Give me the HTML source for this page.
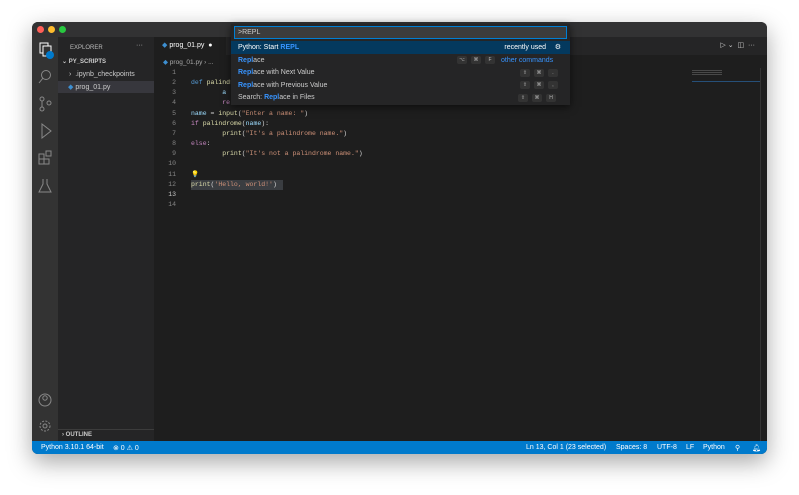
<!DOCTYPE html>
<html><head><style>
*{margin:0;padding:0;box-sizing:border-box}
body{width:799px;height:495px;background:#fff;font-family:"Liberation Sans",sans-serif;position:relative;overflow:hidden}
.win{position:absolute;left:32px;top:22px;width:735px;height:432px;background:#1e1e1e;border-radius:6px;overflow:hidden;box-shadow:0 8px 24px rgba(0,0,0,.35)}
.title{position:absolute;left:0;top:0;width:100%;height:15px;background:#323233}
.dot{position:absolute;top:4px;width:7px;height:7px;border-radius:50%}
.act{position:absolute;left:0;top:15px;width:26px;height:404px;background:#333333}
.side{position:absolute;left:26px;top:15px;width:96px;height:404px;background:#252526;color:#ccc;font-size:7px}
.tabs{position:absolute;left:122px;top:15px;right:0;height:18px;background:#252526}
.tab{position:absolute;left:0;top:0;width:72px;height:18px;background:#1e1e1e;color:#fff;font-size:7px;padding:4px 0 0 8px}
.crumb{position:absolute;left:122px;top:33px;right:0;height:13px;background:#1e1e1e;color:#aaa;font-size:6.5px;padding:3px 0 0 9px}
.code{position:absolute;left:122px;top:46px;font-family:"Liberation Mono",monospace;font-size:6.5px;line-height:10.15px;color:#d4d4d4}
.ln{position:absolute;left:0;width:22px;text-align:right;color:#858585}
.cl{position:absolute;left:37px;white-space:pre}
.status{position:absolute;left:0;bottom:0;width:100%;height:13px;background:#007acc;color:#fff;font-size:7px}
.status span{position:absolute;top:2.5px}
.qp{position:absolute;left:231px;top:24px;width:339px;height:81px;background:#252526;box-shadow:0 2px 8px rgba(0,0,0,.6);font-size:7px;color:#ccc}
.qi{position:absolute;left:3px;top:2px;width:333px;height:13px;background:#3c3c3c;border:1px solid #007fd4;color:#ccc;padding:2px 0 0 3px;font-size:7px}
.row{position:absolute;left:0;width:339px;height:12.5px;padding:2.5px 0 0 7px}
.b{color:#3794ff;font-weight:bold}
.k{position:absolute;top:2px;width:10px;height:8px;background:#333;border-radius:2px;color:#bbb;font-size:5px;text-align:center;line-height:8px}
.kw{color:#c586c0}.fn{color:#dcdcaa}.st{color:#ce9178}.vr{color:#9cdcfe}.df{color:#569cd6}
</style></head><body>
<div class="win">
 <div class="title"><div class="dot" style="left:5px;background:#ff5f57"></div><div class="dot" style="left:16px;background:#febc2e"></div><div class="dot" style="left:27px;background:#28c840"></div></div>
 <div class="act">
  <svg width="26" height="404" fill="none" stroke="#ccc" stroke-width="1">
   <rect x="8" y="6" width="8" height="10" stroke="#fff"/><rect x="11" y="9" width="8" height="10" fill="#333" stroke="#fff"/>
   <circle cx="18" cy="18" r="4" fill="#007acc" stroke="none"/>
   <circle cx="14" cy="38" r="4.5" stroke="#888"/><line x1="11" y1="41" x2="7" y2="46" stroke="#888"/>
   <circle cx="10" cy="62" r="2" stroke="#888"/><circle cx="10" cy="72" r="2" stroke="#888"/><circle cx="17" cy="66" r="2" stroke="#888"/><line x1="10" y1="64" x2="10" y2="70" stroke="#888"/>
   <path d="M10 87 L19 94 L10 101 Z" stroke="#888"/>
   <rect x="7" y="117" width="5" height="5" stroke="#888"/><rect x="7" y="122" width="5" height="5" stroke="#888"/><rect x="12" y="122" width="5" height="5" stroke="#888"/><rect x="14" y="114" width="5" height="5" stroke="#888"/>
   <path d="M11 142 V147 L7 155 H19 L15 147 V142" stroke="#888"/>
   <circle cx="13" cy="363" r="6" stroke="#888"/><circle cx="13" cy="361" r="2.2" stroke="#888"/>
   <circle cx="13" cy="389" r="5" stroke="#888" stroke-dasharray="2 1.4"/><circle cx="13" cy="389" r="2" stroke="#888"/>
  </svg>
 </div>
 <div class="side">
  <div style="position:absolute;left:12px;top:8px;color:#bbb;font-size:6px">EXPLORER</div>
  <div style="position:absolute;left:78px;top:5px;color:#bbb">···</div>
  <div style="position:absolute;left:4px;top:21px;font-weight:bold;font-size:6px">⌄ PY_SCRIPTS</div>
  <div style="position:absolute;left:11px;top:34px">›&nbsp; .ipynb_checkpoints</div>
  <div style="position:absolute;left:0;top:44px;width:96px;height:12px;background:#37373d"></div>
  <div style="position:absolute;left:10px;top:46px"><span style="color:#3d8fd1">◆</span> prog_01.py</div>
  <div style="position:absolute;left:0;top:392px;width:96px;border-top:1px solid #3c3c3c"></div>
  <div style="position:absolute;left:4px;top:395px;font-weight:bold;font-size:6px">› OUTLINE</div>
 </div>
 <div class="tabs"><div class="tab"><span style="color:#3d8fd1">◆</span> prog_01.py &nbsp;●</div>
  <div style="position:absolute;right:12px;top:4px;color:#ccc;font-size:7px">▷ ⌄ &nbsp;◫ &nbsp;···</div></div>
 <div class="crumb"><span style="color:#3d8fd1">◆</span> prog_01.py › ...</div>
 <div class="code">
  <div style="position:absolute;left:37px;top:112px;width:92px;height:10px;background:#3a3d41"></div>
  <div class="ln" style="top:0">1</div><div class="ln" style="top:10.15px">2</div><div class="ln" style="top:20.3px">3</div><div class="ln" style="top:30.45px">4</div><div class="ln" style="top:40.6px">5</div><div class="ln" style="top:50.75px">6</div><div class="ln" style="top:60.9px">7</div><div class="ln" style="top:71.05px">8</div><div class="ln" style="top:81.2px">9</div><div class="ln" style="top:91.35px">10</div><div class="ln" style="top:101.5px">11</div><div class="ln" style="top:111.65px">12</div><div class="ln" style="top:121.8px;color:#c6c6c6">13</div><div class="ln" style="top:131.95px">14</div>
  <div class="cl" style="top:10.15px"><span class="df">def</span> <span class="fn">palindrome</span></div>
  <div class="cl" style="top:20.3px">        <span class="vr">a</span></div>
  <div class="cl" style="top:30.45px">        <span class="kw">re</span></div>
  <div class="cl" style="top:40.6px"><span class="vr">name</span> = <span class="fn">input</span>(<span class="st">"Enter a name: "</span>)</div>
  <div class="cl" style="top:50.75px"><span class="kw">if</span> <span class="fn">palindrome</span>(<span class="vr">name</span>):</div>
  <div class="cl" style="top:60.9px">        <span class="fn">print</span>(<span class="st">"It's a palindrome name."</span>)</div>
  <div class="cl" style="top:71.05px"><span class="kw">else</span>:</div>
  <div class="cl" style="top:81.2px">        <span class="fn">print</span>(<span class="st">"It's not a palindrome name."</span>)</div>
  <div class="cl" style="top:101.5px;color:#ffcc00">💡</div>
  <div class="cl" style="top:111.65px"><span class="fn">print</span>(<span class="st">'Hello, world!'</span>)</div>
 </div>
 <div style="position:absolute;left:660px;top:48px;width:30px;height:6px;background:repeating-linear-gradient(#666 0 1px,transparent 1px 2px);opacity:.6"></div>
 <div style="position:absolute;left:660px;top:59px;width:68px;height:1px;background:#264f78"></div>
 <div style="position:absolute;left:728px;top:46px;width:7px;height:373px;border-left:1px solid #333"></div>
 <div class="status">
  <span style="left:9px">Python 3.10.1 64-bit</span><span style="left:81px">⊗ 0 ⚠ 0</span>
  <span style="left:494px">Ln 13, Col 1 (23 selected)</span><span style="left:584px">Spaces: 8</span><span style="left:625px">UTF-8</span><span style="left:654px">LF</span><span style="left:671px">Python</span><span style="left:703px">⚲</span><span style="left:720px">🔔︎</span>
 </div>
</div>
<div class="qp">
 <div class="qi">&gt;REPL</div>
 <div class="row" style="top:17px;background:#04395e;color:#fff">Python: Start <span class="b">REPL</span><span style="position:absolute;right:24px;top:2.5px">recently used</span><span style="position:absolute;right:9px;top:1.5px">⚙</span></div>
 <div class="row" style="top:30px"><span class="b">Repl</span>ace<span class="k" style="left:226px">⌥</span><span class="k" style="left:240px">⌘</span><span class="k" style="left:254px">F</span><span style="position:absolute;left:270px;top:2.5px;color:#3794ff">other commands</span></div>
 <div class="row" style="top:42.5px"><span class="b">Repl</span>ace with Next Value<span class="k" style="left:289px">⇧</span><span class="k" style="left:303px">⌘</span><span class="k" style="left:317px">.</span></div>
 <div class="row" style="top:55px"><span class="b">Repl</span>ace with Previous Value<span class="k" style="left:289px">⇧</span><span class="k" style="left:303px">⌘</span><span class="k" style="left:317px">,</span></div>
 <div class="row" style="top:67.5px">Search: <span class="b">Repl</span>ace in Files<span class="k" style="left:287px">⇧</span><span class="k" style="left:301px">⌘</span><span class="k" style="left:315px">H</span></div>
</div>
</body></html>
